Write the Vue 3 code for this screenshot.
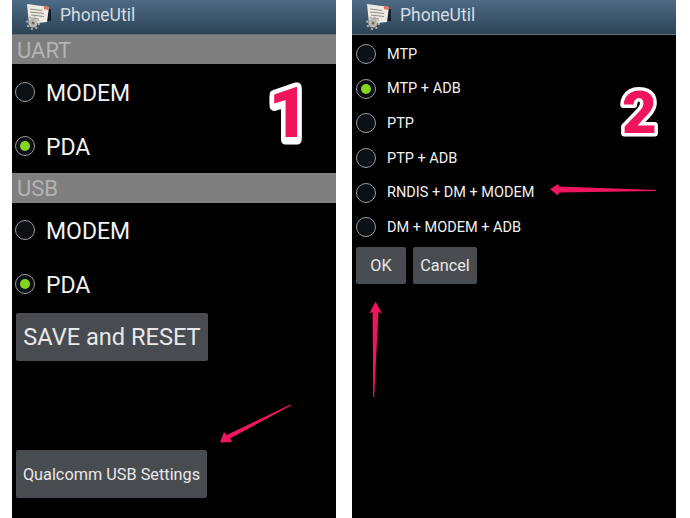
<script setup>
const uartOptions = [
  { label: "MODEM", on: false },
  { label: "PDA", on: true },
];
const usbOptions = [
  { label: "MODEM", on: false },
  { label: "PDA", on: true },
];
const modes = [
  { label: "MTP", on: false },
  { label: "MTP + ADB", on: true },
  { label: "PTP", on: false },
  { label: "PTP + ADB", on: false },
  { label: "RNDIS + DM + MODEM", on: false },
  { label: "DM + MODEM + ADB", on: false },
];
</script>

<template>
  <div class="page">
    <div class="phone">
      <header class="bar">
        <svg class="app-icon" viewBox="0 0 30 30" width="30" height="30" aria-hidden="true">
          <path d="M24 9h4v12h-4z" fill="#15202a" />
          <path d="M4 4 L26 7 L24 22 L6 24 Z" fill="#eee9e2" />
          <path d="M21 5.6 L26 7 L25.6 10 L21 9.2 Z" fill="#d9766f" />
          <path d="M7 9 L19 10.5 M7 12 L21 13.5 M8 15 L21 16.5 M8 18 L16 19" stroke="#8c8c86" stroke-width="1" />
          <circle cx="10" cy="23" r="4.6" fill="#b9b7b0" />
          <circle cx="10" cy="23" r="6" fill="none" stroke="#b9b7b0" stroke-width="1.8" stroke-dasharray="2 2.7" />
          <circle cx="10" cy="23" r="1.5" fill="#6a6a66" />
        </svg>
        <span class="bar-title">PhoneUtil</span>
      </header>

      <div class="section">UART</div>
      <div class="big-list first">
        <div v-for="opt in uartOptions" :key="opt.label" class="big-row">
          <span class="radio" :class="{ on: opt.on }"></span>
          <span class="big-label">{{ opt.label }}</span>
        </div>
      </div>

      <div class="section usb">USB</div>
      <div class="big-list">
        <div v-for="opt in usbOptions" :key="opt.label" class="big-row">
          <span class="radio" :class="{ on: opt.on }"></span>
          <span class="big-label">{{ opt.label }}</span>
        </div>
      </div>

      <button class="btn save">SAVE and RESET</button>
      <button class="btn qualcomm">Qualcomm USB Settings</button>

      <svg class="step step-one" viewBox="0 0 50 76" width="50" height="76">
        <text x="6.5" y="61" font-size="70" stroke-width="9">1</text>
      </svg>
      <svg class="arrow arrow-left" viewBox="0 0 72 40" width="72" height="40" aria-hidden="true">
        <path d="M70.5 0.5 L71 1.5 L10 34.5 L12.5 38 L0 38.5 L4 28 L6.8 31 Z" fill="#f0155f" />
      </svg>
    </div>

    <div class="phone">
      <header class="bar">
        <svg class="app-icon" viewBox="0 0 30 30" width="30" height="30" aria-hidden="true">
          <path d="M24 9h4v12h-4z" fill="#15202a" />
          <path d="M4 4 L26 7 L24 22 L6 24 Z" fill="#eee9e2" />
          <path d="M21 5.6 L26 7 L25.6 10 L21 9.2 Z" fill="#d9766f" />
          <path d="M7 9 L19 10.5 M7 12 L21 13.5 M8 15 L21 16.5 M8 18 L16 19" stroke="#8c8c86" stroke-width="1" />
          <circle cx="10" cy="23" r="4.6" fill="#b9b7b0" />
          <circle cx="10" cy="23" r="6" fill="none" stroke="#b9b7b0" stroke-width="1.8" stroke-dasharray="2 2.7" />
          <circle cx="10" cy="23" r="1.5" fill="#6a6a66" />
        </svg>
        <span class="bar-title">PhoneUtil</span>
      </header>

      <div class="small-list">
        <div v-for="mode in modes" :key="mode.label" class="small-row">
          <span class="radio" :class="{ on: mode.on }"></span>
          <span>{{ mode.label }}</span>
        </div>
      </div>

      <div class="actions">
        <button class="btn ok">OK</button>
        <button class="btn cancel">Cancel</button>
      </div>

      <svg class="step step-two" viewBox="0 0 60 70" width="60" height="70">
        <text x="12" y="58" font-size="60" stroke-width="7">2</text>
      </svg>
      <svg class="arrow arrow-right" viewBox="0 0 107 12" width="107" height="12" aria-hidden="true">
        <path d="M106 6 L106 7 L9 8.5 L8 11.5 L0 5.3 L8 0 L9 2.5 Z" fill="#f0155f" />
      </svg>
      <svg class="arrow arrow-up" viewBox="0 0 14 97" width="14" height="97" aria-hidden="true">
        <path d="M6.7 0.5 L0.3 12.5 L3.6 11 L4.2 96 L5.2 96 L9.4 11 L12.9 12.5 Z" fill="#f0155f" />
      </svg>
    </div>
  </div>
</template>

<style scoped>
.page {
  width: 690px;
  height: 518px;
  box-sizing: border-box;
  padding: 0 14px 0 12px;
  display: flex;
  gap: 16px;
  background: #fff;
  overflow: hidden;
  font-family: Roboto, "Liberation Sans", sans-serif;
}

.phone {
  position: relative;
  width: 324px;
  height: 518px;
  background: #000;
  color: #f2f2f2;
}

.bar {
  height: 35px;
  box-sizing: border-box;
  display: flex;
  align-items: center;
  gap: 7px;
  padding: 0 0 4px 11px;
  background: linear-gradient(180deg, #4d6b86, #2d4355);
  border-bottom: 1px solid #5d7485;
}

.app-icon {
  flex: none;
}

.bar-title {
  font-size: 17.5px;
  color: #d5dde3;
}

.section {
  height: 29px;
  box-sizing: border-box;
  padding: 2px 0 0 5px;
  background: #7f7f7f;
  color: #b4b4b4;
  font-size: 22px;
  line-height: 27px;
}

.section.usb {
  height: 30px;
  line-height: 28px;
}

.big-list {
  display: flex;
  flex-direction: column;
}

.big-list.first {
  padding-top: 1px;
}

.big-row {
  height: 54px;
  display: flex;
  align-items: center;
  gap: 11px;
  padding-left: 3px;
  font-size: 23px;
}

.big-label {
  padding-top: 2px;
}

.radio {
  flex: none;
  box-sizing: border-box;
  width: 20px;
  height: 20px;
  border-radius: 50%;
  border: 1px solid #9a9a9a;
  background: #0c1014;
  display: flex;
  align-items: center;
  justify-content: center;
}

.radio.on::after {
  content: "";
  width: 10px;
  height: 10px;
  border-radius: 50%;
  background: #86d41c;
}

.small-list {
  display: flex;
  flex-direction: column;
  padding-top: 2px;
}

.small-row {
  height: 34.6px;
  display: flex;
  align-items: center;
  gap: 11.5px;
  padding-left: 3.5px;
  font-size: 14.5px;
}

.btn {
  display: block;
  box-sizing: border-box;
  padding: 0;
  border: 0;
  border-radius: 2px;
  background: #484c51;
  color: #e8e8e8;
  font-family: inherit;
  text-align: center;
}

.save {
  width: 192px;
  height: 48px;
  margin: 2px 0 0 4px;
  font-size: 23.6px;
}

.qualcomm {
  width: 191px;
  height: 48px;
  margin: 89px 0 0 4px;
  font-size: 16.3px;
}

.actions {
  display: flex;
  gap: 7px;
  margin: 2px 0 0 4px;
}

.ok {
  width: 50px;
  height: 37px;
  font-size: 16.3px;
}

.cancel {
  width: 64px;
  height: 37px;
  font-size: 16.3px;
}

.step {
  position: absolute;
  display: block;
  overflow: visible;
}

.step text {
  font-family: Roboto, "Liberation Sans", sans-serif;
  font-weight: 900;
  fill: #f0145a;
  stroke: #fff;
  stroke-linejoin: round;
  paint-order: stroke fill;
}

.step-one {
  left: 250px;
  top: 76px;
  filter: drop-shadow(0 3px 0 #fff);
}

.step-two {
  left: 258px;
  top: 75px;
}

.arrow {
  position: absolute;
  display: block;
}

.arrow-left {
  left: 208px;
  top: 404px;
}

.arrow-right {
  left: 198px;
  top: 184px;
}

.arrow-up {
  left: 17px;
  top: 301px;
}
</style>
